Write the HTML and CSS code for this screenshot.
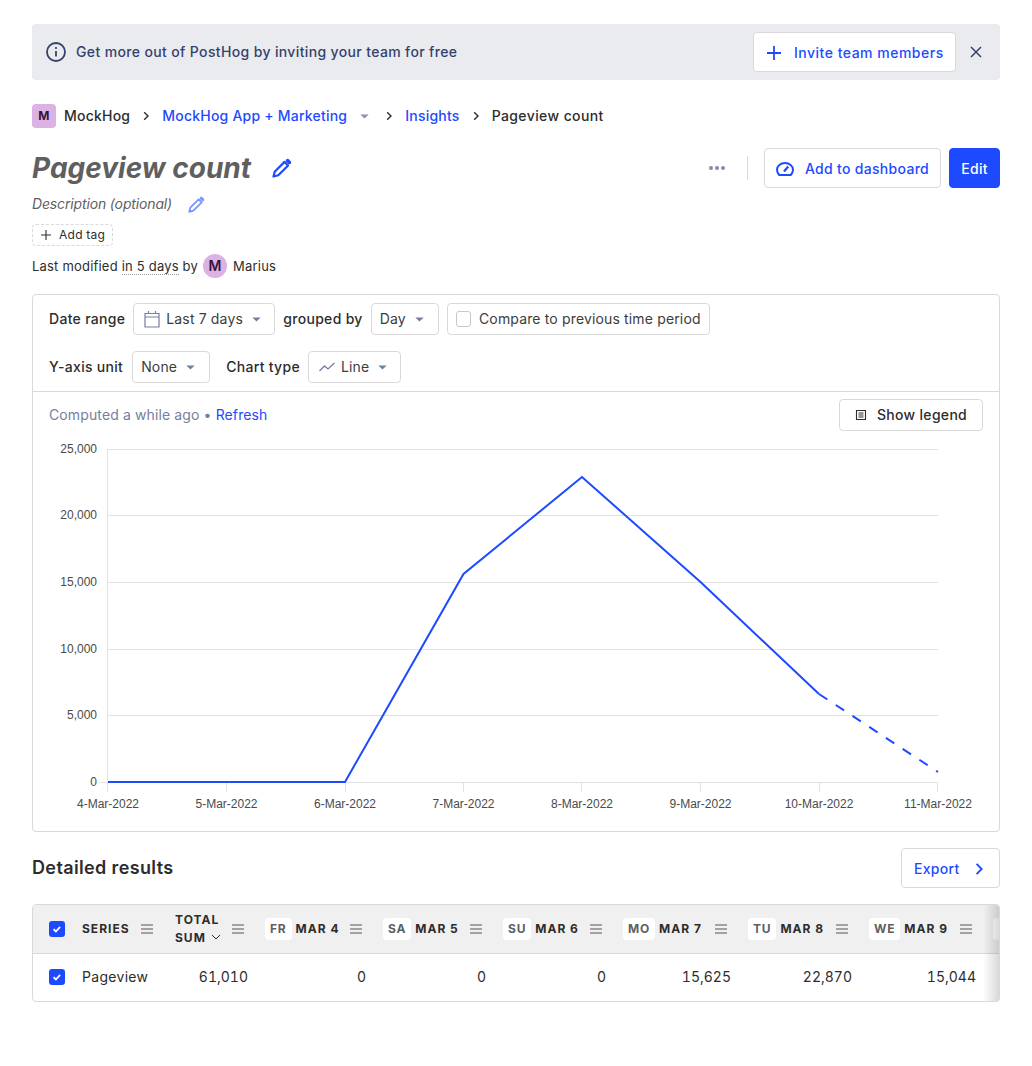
FILE: index.html
```html
<!DOCTYPE html>
<html lang="en">
<head>
  <meta charset="UTF-8">
  <title>Pageview count</title>
  <link rel="stylesheet" href="styles.css">
</head>
<body>
  <svg class="sprite" width="0" height="0">
    <symbol id="chev" viewBox="0 0 12 12"><path d="M4.200 2.200 8 6l-3.800 3.800" fill="none" stroke="currentColor" stroke-width="1.400"/></symbol>
    <symbol id="caret" viewBox="0 0 10 6"><path d="M0 .5h10L5 5.500z" fill="currentColor"/></symbol>
    <symbol id="pencil" viewBox="0 0 20 20"><path d="M1.500 18.500l1.200-4.800L12.500 3.900l3.600 3.600L6.300 17.300z" fill="none" stroke="currentColor" stroke-width="2.200" stroke-linejoin="round"/><path d="M15.600 2.600l1.800 1.800" stroke="currentColor" stroke-width="3.600" stroke-linecap="round"/></symbol>
    <symbol id="lines" viewBox="0 0 12 10"><path d="M0 1h12M0 5h12M0 9h12" stroke="currentColor" stroke-width="1"/></symbol>
    <symbol id="tick" viewBox="0 0 16 16"><path d="M4.500 8.200l2.400 2.300 4.200-4.700" fill="none" stroke="#fff" stroke-width="1.800"/></symbol>
  </svg>

  <div class="banner">
    <svg class="banner-icon" viewBox="0 0 20 20"><circle cx="10" cy="10" r="9" fill="none" stroke="currentColor" stroke-width="1.800"/><path d="M10 9v5.500" stroke="currentColor" stroke-width="1.800"/><circle cx="10" cy="6" r="1.100" fill="currentColor"/></svg>
    <span class="banner-text">Get more out of PostHog by inviting your team for free</span>
    <a class="btn btn-link invite">
      <svg class="invite-plus" viewBox="0 0 16 16"><path d="M8 1v14M1 8h14" stroke="currentColor" stroke-width="1.800"/></svg>
      Invite team members
    </a>
    <svg class="banner-close" viewBox="0 0 12 12"><path d="M1 1l10 10M11 1 1 11" stroke="currentColor" stroke-width="1.500"/></svg>
  </div>

  <nav class="crumbs">
    <span class="avatar-square">M</span>
    <span>MockHog</span>
    <svg class="crumb-chev"><use href="#chev"/></svg>
    <a class="link">MockHog App + Marketing</a>
    <svg class="crumb-caret"><use href="#caret"/></svg>
    <svg class="crumb-chev"><use href="#chev"/></svg>
    <a class="link">Insights</a>
    <svg class="crumb-chev"><use href="#chev"/></svg>
    <span class="crumb-last">Pageview count</span>
  </nav>

  <header class="title-row">
    <h1>Pageview count</h1>
    <svg class="title-pencil"><use href="#pencil"/></svg>
    <div class="title-actions">
      <span class="dots"><i></i><i></i><i></i></span>
      <span class="divider"></span>
      <a class="btn btn-link add-dash">
        <svg class="dash-icon" viewBox="0 0 18 14"><path d="M3.200 13h11.600A7.800 7.800 0 0 0 17 7.800C17 3.900 13.400 1 9 1S1 3.900 1 7.800A7.800 7.800 0 0 0 3.200 13z" fill="none" stroke="currentColor" stroke-width="2"/><path d="M8 9.500 12.200 4.500" stroke="currentColor" stroke-width="2.200"/></svg>
        Add to dashboard
      </a>
      <a class="btn btn-primary">Edit</a>
    </div>
  </header>

  <div class="desc-row">
    <em>Description (optional)</em>
    <svg class="desc-pencil"><use href="#pencil"/></svg>
  </div>

  <div class="add-tag">
    <svg viewBox="0 0 10 10"><path d="M5 0v10M0 5h10" stroke="currentColor" stroke-width="1.100"/></svg>
    Add tag
  </div>

  <div class="modified">
    Last modified&nbsp;<span class="dotted">in 5 days</span>&nbsp;by
    <span class="avatar-round">M</span>
    <span>Marius</span>
  </div>

  <section class="card">
    <div class="filters">
      <div class="filter-row">
        <span class="filter-label">Date range</span>
        <span class="select date-select">
          <svg class="cal-icon" viewBox="0 0 16 18"><path d="M1 3.500h14v13.500H1zM1 7h14M4.500 1v3M11.500 1v3" fill="none" stroke="currentColor" stroke-width="1.200"/></svg>
          Last 7 days
          <svg class="sel-caret"><use href="#caret"/></svg>
        </span>
        <span class="filter-label">grouped by</span>
        <span class="select day-select">Day<svg class="sel-caret"><use href="#caret"/></svg></span>
        <span class="select compare"><i class="empty-check"></i>Compare to previous time period</span>
      </div>
      <div class="filter-row">
        <span class="filter-label">Y-axis unit</span>
        <span class="select none-select">None<svg class="sel-caret"><use href="#caret"/></svg></span>
        <span class="filter-label chart-type">Chart type</span>
        <span class="select line-select">
          <svg class="line-icon" viewBox="0 0 16 10"><path d="M.5 9 5.500 4l3.500 3L15.500 1" fill="none" stroke="currentColor" stroke-width="1.300"/></svg>
          Line
          <svg class="sel-caret"><use href="#caret"/></svg>
        </span>
      </div>
    </div>
    <div class="computed-row">
      <span class="computed">Computed a while ago &bull; <a class="link">Refresh</a></span>
      <a class="btn legend-btn">
        <svg class="legend-icon" viewBox="0 0 12 12"><path d="M1.500 1.500h9v9h-9z" fill="none" stroke="currentColor" stroke-width="1.100"/><path d="M3.500 4h5M3.500 6h5M3.500 8h5" stroke="currentColor"/></svg>
        Show legend
      </a>
    </div>
    <svg class="chart" viewBox="33 435 966 396" width="966" height="396">
      <g class="grid">
        <path d="M108 449.500H938M108 515.500H938M108 582.500H938M108 649.500H938M108 715.500H938M100 782.500H938"/>
        <path d="M107.500 449V792M226.500 782V792M345.500 782V792M463.500 782V792M581.500 782V792M700.500 782V792M819.500 782V792M937.500 782V792"/>
      </g>
      <g class="y-labels">
        <text x="97" y="453">25,000</text>
        <text x="97" y="519">20,000</text>
        <text x="97" y="586">15,000</text>
        <text x="97" y="653">10,000</text>
        <text x="97" y="719">5,000</text>
        <text x="97" y="786">0</text>
      </g>
      <g class="x-labels">
        <text x="108" y="808">4-Mar-2022</text>
        <text x="226.500" y="808">5-Mar-2022</text>
        <text x="345" y="808">6-Mar-2022</text>
        <text x="463.500" y="808">7-Mar-2022</text>
        <text x="582" y="808">8-Mar-2022</text>
        <text x="700.500" y="808">9-Mar-2022</text>
        <text x="819" y="808">10-Mar-2022</text>
        <text x="938" y="808">11-Mar-2022</text>
      </g>
      <polyline class="series" points="108,782 226.500,782 345,782 463.500,574 582,477 700.500,582 819,694"/>
      <polyline class="series dashed" points="819,694 938,772"/>
    </svg>
  </section>

  <div class="results-head">
    <h2>Detailed results</h2>
    <a class="btn btn-link export">Export<svg class="export-chev"><use href="#chev"/></svg></a>
  </div>

  <div class="table-wrap">
    <table>
      <colgroup>
        <col class="c-check"><col class="c-series"><col class="c-total"><col class="c-118"><col class="c-120"><col class="c-120"><col class="c-125"><col class="c-121"><col class="c-124"><col class="c-rest">
      </colgroup>
      <thead>
        <tr>
          <th class="check-cell"><span class="check"><svg><use href="#tick"/></svg></span></th>
          <th class="series-head"><div class="th-in">SERIES<svg class="menu"><use href="#lines"/></svg></div></th>
          <th><div class="th-in"><span class="total">TOTAL<br>SUM <svg class="sort" viewBox="0 0 10 6"><path d="M1 1l4 4 4-4" fill="none" stroke="currentColor"/></svg></span><svg class="menu"><use href="#lines"/></svg></div></th>
          <th class="date"><div class="th-in"><span class="day"><b>FR</b>MAR 4</span><svg class="menu"><use href="#lines"/></svg></div></th>
          <th class="date"><div class="th-in"><span class="day"><b>SA</b>MAR 5</span><svg class="menu"><use href="#lines"/></svg></div></th>
          <th class="date"><div class="th-in"><span class="day"><b>SU</b>MAR 6</span><svg class="menu"><use href="#lines"/></svg></div></th>
          <th class="date"><div class="th-in"><span class="day"><b>MO</b>MAR 7</span><svg class="menu"><use href="#lines"/></svg></div></th>
          <th class="date"><div class="th-in"><span class="day"><b>TU</b>MAR 8</span><svg class="menu"><use href="#lines"/></svg></div></th>
          <th class="date"><div class="th-in"><span class="day"><b>WE</b>MAR 9</span><svg class="menu"><use href="#lines"/></svg></div></th>
          <th class="date"><div class="th-in"><span class="day"><b class="day-empty"></b></span></div></th>
        </tr>
      </thead>
      <tbody>
        <tr>
          <td class="check-cell"><span class="check"><svg><use href="#tick"/></svg></span></td>
          <td>Pageview</td>
          <td class="num">61,010</td>
          <td class="num">0</td>
          <td class="num">0</td>
          <td class="num">0</td>
          <td class="num">15,625</td>
          <td class="num">22,870</td>
          <td class="num">15,044</td>
          <td></td>
        </tr>
      </tbody>
    </table>
    <div class="scroll-shadow"></div>
  </div>
</body>
</html>
```

FILE: styles.css
```css
* {
  box-sizing: border-box;
}
body {
  margin: 0;
  padding: 24px 32px 64px;
  background: white;
  color: #2d2d2d;
  font-family: Inter, sans-serif;
  font-size: 14px;
  line-height: 20px;
}
svg {
  flex: none;
  display: block;
}
.sprite {
  position: absolute;
}
.link {
  color: #1d4aff;
}
.btn {
  display: flex;
  align-items: center;
  height: 40px;
  padding: 1px 12px 0;
  background: white;
  border: 1px solid #d9d9d9;
  border-radius: 4px;
  font-weight: 450;
  letter-spacing: 0.3px;
  white-space: nowrap;
}
.btn-link {
  color: #1d4aff;
}
.btn-primary {
  width: 51px;
  padding-left: 0;
  padding-right: 0;
  justify-content: center;
  background: #1d4aff;
  border-color: #1d4aff;
  color: white;
}

.banner {
  display: flex;
  align-items: center;
  height: 56px;
  padding: 0 16px 0 14px;
  background: #eaebef;
  border-radius: 4px;
  color: #35416b;
}
.banner-icon {
  width: 20px;
  height: 20px;
  margin-right: 10px;
}
.banner-text {
  flex: 1;
  font-weight: 450;
  letter-spacing: 0.36px;
}
.invite {
  width: 203px;
  letter-spacing: 0.5px;
}
.invite-plus {
  width: 16px;
  height: 16px;
  margin-right: 12px;
}
.banner-close {
  width: 12px;
  height: 12px;
  margin-left: 14px;
  margin-right: 2px;
}

.crumbs {
  display: flex;
  align-items: center;
  height: 24px;
  margin-top: 24px;
  font-weight: 450;
  letter-spacing: 0.22px;
}
.crumb-last {
  letter-spacing: 0.4px;
}
.avatar-square {
  display: flex;
  align-items: center;
  justify-content: center;
  width: 24px;
  height: 24px;
  margin-right: 8px;
  background: #dcb1e3;
  border-radius: 4px;
  color: #35163d;
  font-size: 12px;
  font-weight: 700;
}
.crumb-chev {
  width: 12px;
  height: 12px;
  margin: 0 10px;
}
.crumb-caret {
  width: 9px;
  height: 5px;
  margin: 0 4px 0 13px;
  color: #8a91ad;
}

.title-row {
  display: flex;
  align-items: center;
  height: 40px;
  margin-top: 20px;
}
h1 {
  margin: 0;
  color: #5f5f5f;
  font-size: 28px;
  line-height: 40px;
  font-style: italic;
  font-weight: 700;
}
.title-pencil {
  width: 20px;
  height: 20px;
  margin-left: 21px;
  color: #1d4aff;
}
.title-actions {
  display: flex;
  align-items: center;
  gap: 8px;
  margin-left: auto;
}
.dots {
  display: flex;
  gap: 2px;
  margin-right: 14px;
}
.dots i {
  width: 4px;
  height: 4px;
  border-radius: 50%;
  background: #858ba6;
}
.divider {
  width: 1px;
  height: 24px;
  margin-right: 8px;
  background: #d9d9d9;
}
.dash-icon {
  width: 18px;
  height: 14px;
  margin-right: 11px;
}
.add-dash {
  width: 177px;
  padding-left: 11px;
}

.desc-row {
  display: flex;
  align-items: center;
  height: 20px;
  margin-top: 6px;
  color: #5f5f5f;
  letter-spacing: -0.15px;
}
.desc-pencil {
  width: 17px;
  height: 17px;
  margin-left: 16px;
  color: #7b94ff;
}
.add-tag {
  display: flex;
  align-items: center;
  width: 81px;
  height: 22px;
  margin-top: 10px;
  padding-left: 8px;
  border: 1px dashed #d9d9d9;
  border-radius: 4px;
  font-size: 12px;
  letter-spacing: 0.25px;
}
.add-tag svg {
  width: 10px;
  height: 10px;
  margin-right: 8px;
}
.modified {
  display: flex;
  align-items: center;
  height: 24px;
  margin-top: 8px;
  font-size: 13px;
  letter-spacing: 0.2px;
}
.dotted {
  border-bottom: 1px dotted #999;
  line-height: 16px;
}
.avatar-round {
  display: flex;
  align-items: center;
  justify-content: center;
  width: 24px;
  height: 24px;
  margin: 0 6px 0 5px;
  border-radius: 50%;
  background: #dcb1e3;
  color: #35163d;
  font-size: 14px;
  font-weight: 600;
}

.card {
  margin-top: 16px;
  border: 1px solid #d9d9d9;
  border-radius: 4px;
  height: 538px;
}
.filters {
  display: flex;
  flex-direction: column;
  gap: 16px;
  padding: 8px 16px;
  border-bottom: 1px solid #d9d9d9;
}
.filter-row {
  display: flex;
  align-items: center;
  gap: 8px;
}
.filter-label {
  font-weight: 450;
  letter-spacing: 0.3px;
}
.chart-type {
  margin-left: 8px;
}
.select {
  display: flex;
  align-items: center;
  height: 32px;
  padding: 0 8px;
  border: 1px solid #d9d9d9;
  border-radius: 4px;
  color: #3c3c3c;
  letter-spacing: 0.15px;
  white-space: nowrap;
}
.sel-caret {
  width: 9px;
  height: 5px;
  margin-left: 9px;
  color: #747ea1;
}
.date-select {
  width: 142px;
}
.cal-icon {
  width: 16px;
  height: 18px;
  margin: 0 6px 0 2px;
  color: #747ea1;
}
.day-select {
  width: 68px;
}
.none-select {
  width: 78px;
  margin-left: 1px;
}
.line-select {
  width: 93px;
}
.compare {
  width: 263px;
}
.empty-check {
  width: 16px;
  height: 16px;
  margin-right: 8px;
  border: 1px solid #c8c8c8;
  border-radius: 3px;
}
.line-icon {
  width: 16px;
  height: 10px;
  margin: 0 6px 0 2px;
  color: #747ea1;
}
.computed-row {
  display: flex;
  align-items: center;
  justify-content: space-between;
  padding: 7px 16px 0;
}
.computed {
  color: #747ea1;
  letter-spacing: 0.12px;
}
.legend-btn {
  height: 32px;
  width: 144px;
  padding: 0 15px;
}
.legend-icon {
  width: 12px;
  height: 12px;
  margin-right: 10px;
}
.chart {
  margin-top: 4px;
}
.grid path {
  fill: none;
  stroke: #e2e2e2;
  stroke-width: 1;
}
.y-labels text,
.x-labels text {
  fill: #4a4a4a;
  font-family: "Liberation Sans", sans-serif;
  font-size: 12px;
}
.y-labels text {
  text-anchor: end;
}
.x-labels text {
  text-anchor: middle;
}
.series {
  fill: none;
  stroke: #1d4aff;
  stroke-width: 2;
}
.series.dashed {
  stroke-dasharray: 10 10;
}

.results-head {
  display: flex;
  align-items: center;
  justify-content: space-between;
  margin-top: 16px;
}
h2 {
  margin: 0;
  font-size: 18px;
  font-weight: 600;
  letter-spacing: 0.37px;
}
.export {
  width: 99px;
}
.export-chev {
  width: 16px;
  height: 16px;
  margin-left: auto;
}

.table-wrap {
  position: relative;
  margin-top: 16px;
  width: 968px;
  height: 98px;
  border: 1px solid #d9d9d9;
  border-radius: 4px;
  overflow: hidden;
}
table {
  width: 1066px;
  table-layout: fixed;
  border-collapse: collapse;
}
.c-check { width: 33px; }
.c-series { width: 93px; }
.c-total { width: 105px; }
.c-118 { width: 118px; }
.c-120 { width: 120px; }
.c-125 { width: 125px; }
.c-121 { width: 121px; }
.c-124 { width: 124px; }
.c-rest { width: 107px; }
th {
  height: 48px;
  padding: 0 16px;
  background: #f0f0f0;
  border-bottom: 1px solid #d9d9d9;
  font-size: 12px;
  line-height: 18px;
  font-weight: 700;
  letter-spacing: 1px;
  text-align: left;
}
th.date {
  padding-left: 1px;
}
th.series-head {
  padding-right: 2px;
}
td {
  height: 47px;
  padding: 0 16px;
  letter-spacing: 0.3px;
  font-variant-numeric: tabular-nums;
}
td.num {
  text-align: right;
  letter-spacing: 0;
}
.check-cell {
  padding: 0 0 0 16px;
}
.check {
  display: block;
  width: 16px;
  height: 16px;
  background: #1d4aff;
  border-radius: 3px;
}
.check svg {
  width: 16px;
  height: 16px;
}
.th-in {
  display: flex;
  align-items: center;
  justify-content: space-between;
  white-space: nowrap;
}
.menu {
  width: 12px;
  height: 10px;
  margin-right: 4px;
  color: #555;
}
.total {
  display: block;
}
.sort {
  display: inline-block;
  width: 10px;
  height: 6px;
  margin: 0 0 2px 1px;
}
.day {
  display: flex;
  align-items: center;
  gap: 4px;
}
.day b {
  padding: 2px 5px;
  background: white;
  border-radius: 4px;
  color: #5f5f5f;
  font-weight: 700;
  letter-spacing: 0.8px;
}
.day b.day-empty {
  width: 30px;
  height: 22px;
}
.scroll-shadow {
  position: absolute;
  top: 0;
  right: 0;
  bottom: 0;
  width: 16px;
  background: linear-gradient(to left, rgba(0, 0, 0, 0.15), rgba(0, 0, 0, 0));
}
```
